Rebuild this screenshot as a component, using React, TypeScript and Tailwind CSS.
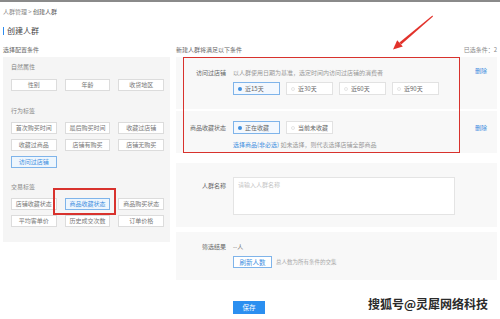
import React from "react";

const FONT = { fontFamily: '"Noto Sans CJK SC", "Noto Sans", sans-serif' };

interface TagGroup {
  title: string;
  tags: string[];
}

const tagGroups: TagGroup[] = [
  { title: "自然属性", tags: ["性别", "年龄", "收货地区"] },
  {
    title: "行为标签",
    tags: ["首次购买时间", "最后购买时间", "收藏过店铺", "收藏过商品", "店铺有购买", "店铺无购买", "访问过店铺"],
  },
  {
    title: "交易标签",
    tags: ["店铺收藏状态", "商品收藏状态", "商品购买状态", "平均客单价", "历史成交次数", "订单价格"],
  },
];

const activeTags = ["访问过店铺", "商品收藏状态"];

const TagButton: React.FC<{ label: string }> = ({ label }) => {
  const active = activeTags.includes(label);
  return (
    <div
      className={
        active
          ? "relative h-[12px] border border-[#7fb4ea] bg-[#eef6fd] text-[#3f8fdf] text-[6px] leading-[10px] text-center"
          : "relative h-[12px] border border-[#dcdcdc] bg-white text-[#777] text-[6px] leading-[10px] text-center"
      }
    >
      {label}
      {/* annotation box from the screenshot */}
      {label === "商品收藏状态" && (
        <span className="absolute -left-[13px] -right-[7px] -top-[11px] -bottom-[6px] border-2 border-[#d8322d]" />
      )}
    </div>
  );
};

const Radio: React.FC<{ label: string; checked?: boolean }> = ({ label, checked }) => (
  <div
    className={
      checked
        ? "w-[47px] h-[13px] border border-[#7fb4ea] bg-[#f3f8fe] flex items-center pl-[4px] gap-[3px]"
        : "w-[47px] h-[13px] border border-[#e2e2e2] bg-white flex items-center pl-[4px] gap-[3px]"
    }
  >
    {checked ? (
      <span className="w-[4px] h-[4px] rounded-full bg-[#3f8fdf]" />
    ) : (
      <span className="w-[4px] h-[4px] rounded-full border border-[#e6e6e6]" />
    )}
    <span className="text-[6px] leading-none text-[#666]">{label}</span>
  </div>
);

const App: React.FC = () => {
  return (
    <div className="relative w-[500px] h-[319px] overflow-hidden bg-white text-[#666]" style={FONT}>
      <div className="h-[2px] bg-[#8a8a8a]" />

      {/* breadcrumb */}
      <div className="mt-[6px] pl-[3px] h-[8px] leading-[8px] text-[6px] text-[#888]">
        人群管理 &gt; <span className="text-[#555]">创建人群</span>
      </div>

      {/* title */}
      <div className="mt-[10px] pl-[3px] h-[10px] flex items-center gap-[3px]">
        <span className="w-[1px] h-[8px] bg-[#2d8cf0]" />
        <span className="text-[8px] leading-[10px] text-[#444]">创建人群</span>
      </div>

      <div className="mt-[10px] flex">
        {/* left column */}
        <div className="ml-[3px] w-[167px]">
          <div className="h-[8px] leading-[8px] text-[6px] text-[#666]">选择配置条件</div>
          <div className="mt-[3px] bg-[#f5f5f5] pl-[8px] pr-[6px] pt-[6px] pb-[15px]">
            {tagGroups.map((group, i) => (
              <div key={group.title} className={i === 0 ? "" : i === 1 ? "mt-[16px]" : "mt-[15px]"}>
                <div className="h-[8px] leading-[8px] text-[6px] text-[#888]">{group.title}</div>
                <div className={i === 0 ? "mt-[8px] grid grid-cols-3 gap-x-[8px] gap-y-[5px]" : "mt-[7px] grid grid-cols-3 gap-x-[8px] gap-y-[5px]"}>
                  {group.tags.map((t) => (
                    <TagButton key={t} label={t} />
                  ))}
                </div>
              </div>
            ))}
          </div>
        </div>

        {/* right column */}
        <div className="ml-[6px] w-[321px]">
          <div className="h-[8px] leading-[8px] text-[6px] text-[#666] flex justify-between">
            <span>新建人群将满足以下条件</span>
            <span className="text-[#888]">已选条件：2</span>
          </div>

          <div className="relative mt-[3px]">
            {/* section: visited store */}
            <div className="bg-[#f8f8f8] flex items-start pt-[12px] pb-[14px]">
              <div className="w-[50px] text-right h-[8px] leading-[8px] text-[6px] text-[#666]">访问过店铺</div>
              <div className="ml-[7px] w-[222px]">
                <div className="h-[8px] leading-[8px] text-[6px] text-[#999]">
                  以人群使用日期为基准，选定时间内访问过店铺的消费者
                </div>
                <div className="mt-[5px] flex gap-[6px]">
                  <Radio label="近15天" checked />
                  <Radio label="近30天" />
                  <Radio label="近60天" />
                  <Radio label="近90天" />
                </div>
              </div>
              <div className="ml-[20px] -mt-[2px] h-[8px] leading-[8px] text-[6px] text-[#3f8fdf]">删除</div>
            </div>

            {/* section: item favourite state */}
            <div className="mt-[2px] bg-[#f8f8f8] flex items-start pt-[10px] pb-[4px]">
              <div className="w-[50px] text-right h-[13px] leading-[13px] text-[6px] text-[#666]">商品收藏状态</div>
              <div className="ml-[7px] w-[222px]">
                <div className="flex gap-[6px]">
                  <Radio label="正在收藏" checked />
                  <Radio label="当前未收藏" />
                </div>
                <div className="mt-[7px] h-[8px] leading-[8px] text-[6px] text-[#999]">
                  <span className="text-[#3f8fdf]">选择商品(非必选)</span> 如未选择，则代表选择店铺全部商品
                </div>
              </div>
              <div className="ml-[20px] mt-[3px] h-[8px] leading-[8px] text-[6px] text-[#3f8fdf]">删除</div>
            </div>

            {/* annotation box */}
            <span className="absolute left-[7px] top-0 w-[277px] h-[96px] border-[1.5px] border-[#d8322d]" />
          </div>

          {/* crowd name */}
          <div className="mt-[10px] bg-[#f8f8f8] flex items-start pt-[14px] pb-[12px]">
            <div className="w-[50px] mt-[5px] text-right h-[8px] leading-[8px] text-[6px] text-[#666]">人群名称</div>
            <div className="ml-[7px] w-[222px] h-[38px] bg-white border border-[#e4e4e4] px-[4px] pt-[3px] text-[6px] leading-[8px] text-[#c4c4c4]">
              请输入人群名称
            </div>
          </div>

          {/* result */}
          <div className="mt-[5px] bg-[#f8f8f8] flex items-start pt-[11px] pb-[12px]">
            <div className="w-[50px] text-right h-[8px] leading-[8px] text-[6px] text-[#666]">筛选结果</div>
            <div className="ml-[7px]">
              <div className="h-[8px] leading-[8px] text-[6px] text-[#777]">--人</div>
              <div className="mt-[5px] flex items-center gap-[4px]">
                <div className="w-[39px] h-[12px] border border-[#7fb4ea] bg-white text-center text-[6.5px] leading-[10px] text-[#3f8fdf]">
                  刷新人数
                </div>
                <span className="text-[5.5px] text-[#aaa]">总人数为所有条件的交集</span>
              </div>
            </div>
          </div>

          <div className="mt-[21px] ml-[57px] w-[32px] h-[13px] bg-[#2b8ff0] text-white text-[6.5px] leading-[13px] text-center">
            保存
          </div>
        </div>
      </div>

      {/* annotation arrow */}
      <svg className="absolute left-0 top-0" width="500" height="319" viewBox="0 0 500 319">
        <polygon points="432.4,15.6 433,16.4 401.2,44.6 399.4,42.4" fill="#e2322b" />
        <polygon points="393,49.5 397.2,40.2 402.8,46.4" fill="#e2322b" />
      </svg>

      {/* watermark */}
      <div
        className="absolute right-[12px] bottom-[8px] text-[12px] leading-[14px] font-bold text-[#2a2a2a]"
        style={{ textShadow: "0 0 2px #fff, 0 0 2px #fff" }}
      >
        搜狐号@灵犀网络科技
      </div>
    </div>
  );
};

export default App;
